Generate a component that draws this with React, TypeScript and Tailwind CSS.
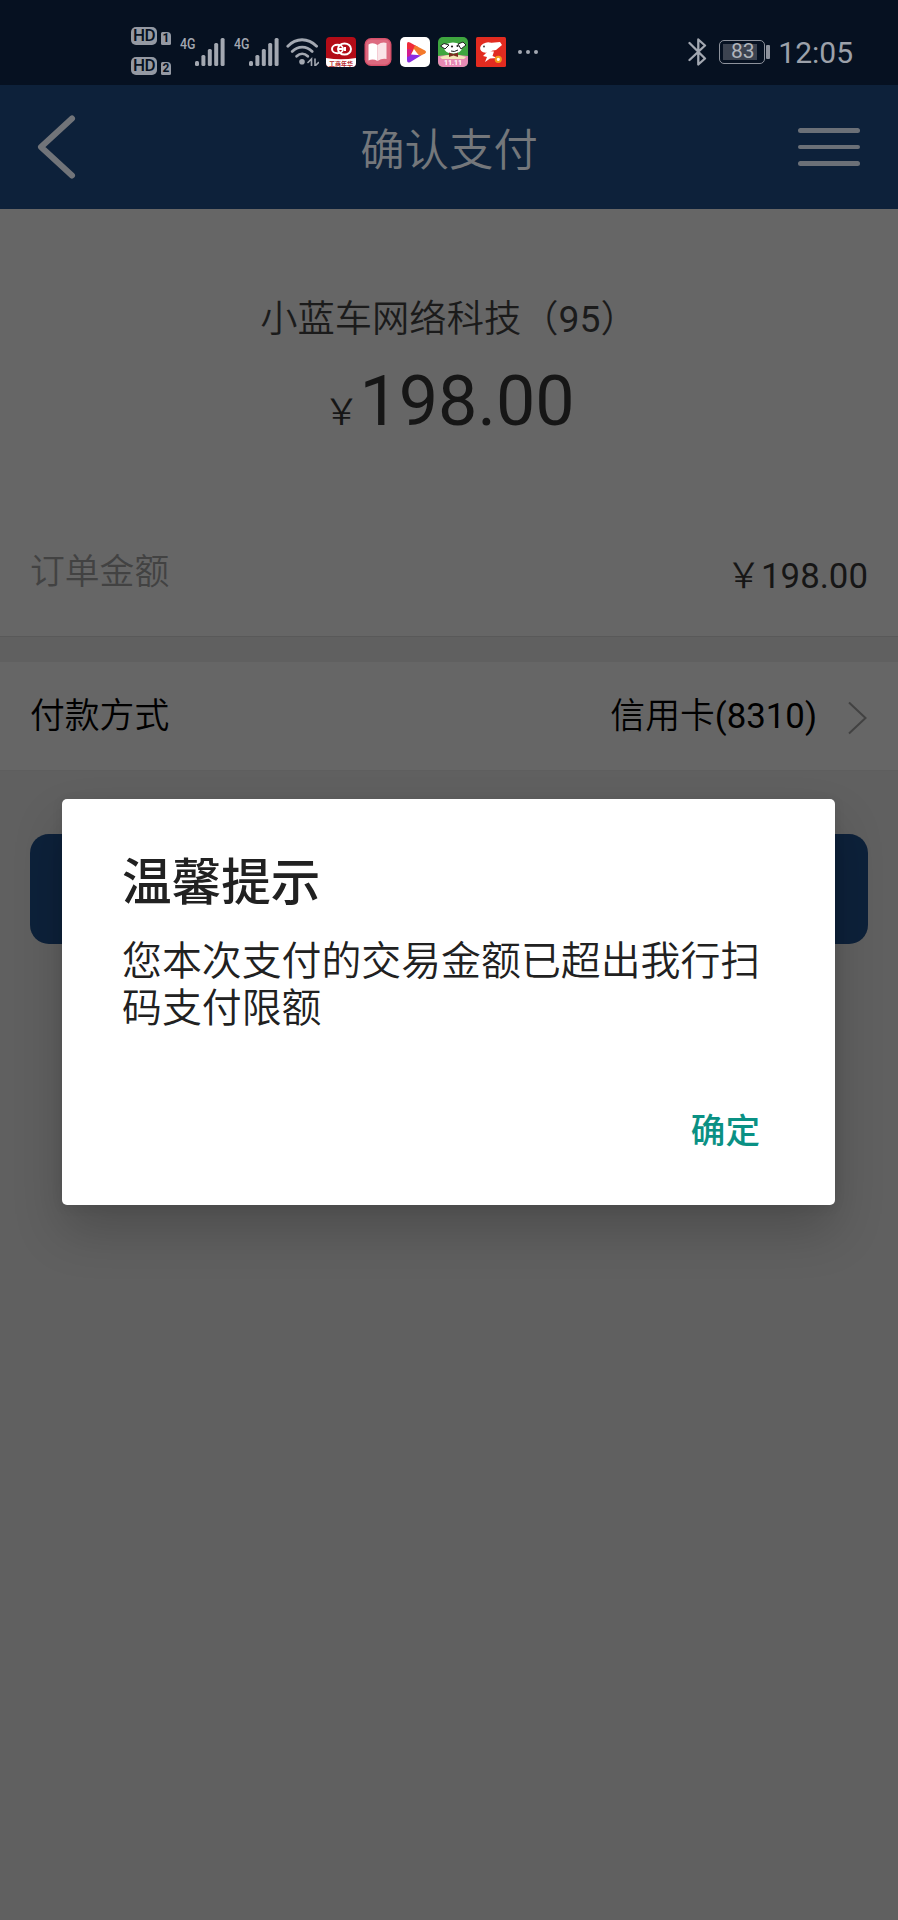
import { FC, ReactNode } from "react";

type SignalProps = { className?: string };

const HdBadge: FC<{ slot: string }> = ({ slot }) => (
  <div className="flex h-[18px] items-end gap-[4px]">
    <div className="flex h-[18px] w-[26px] items-center justify-center rounded-[5px] bg-[#9499a3] text-[17px] leading-none font-medium tracking-[-0.5px] text-[#061121]">
      HD
    </div>
    <div className="flex h-[13px] w-[10px] items-center justify-center rounded-[1.500px] rounded-tr-[4px] bg-[#9499a3] text-[12px] leading-none font-bold text-[#061121]">
      {slot}
    </div>
  </div>
);

const Signal: FC<SignalProps> = ({ className }) => (
  <div className={`flex h-[28px] w-[45px] items-end ${className ?? ""}`}>
    <span className="w-[15px] origin-left scale-x-[0.8] self-start text-[15.5px] leading-[13px] font-medium text-[#a3a8b1]">
      4G
    </span>
    <svg width="30" height="28" viewBox="0 0 30 28" fill="#a3a8b1">
      <rect x="0" y="23" width="4" height="5" rx="1.5" />
      <rect x="6.4" y="17" width="4" height="11" rx="1.5" />
      <rect x="12.8" y="11" width="4" height="17" rx="1.5" />
      <rect x="19.2" y="5" width="4" height="23" rx="1.5" />
      <rect x="25.6" y="0" width="4" height="28" rx="1.5" />
    </svg>
  </div>
);

const Wifi = () => (
  <svg
    className="ml-[7px]"
    width="33"
    height="28"
    viewBox="0 0 33 28"
    fill="none"
    stroke="#a3a8b1"
    strokeWidth="2.8"
    strokeLinecap="round"
  >
    <path d="M1.8 8.2C10 -0.4 22 -0.4 30.6 8.2" />
    <path d="M6.2 13.4C12 7.6 20.4 7.6 26.2 13.4" />
    <path d="M10.6 18.2C14 15 18.4 15 21.8 18.2" />
    <circle cx="16" cy="23.8" r="2.8" fill="#a3a8b1" stroke="none" />
    <path
      d="M22 24.5L25.5 21V27.5M32.5 24.5L29 28V21"
      strokeWidth="1.6"
    />
  </svg>
);

const UnionIcon = () => (
  <svg width="30" height="30" viewBox="0 0 30 30">
    <rect width="30" height="30" rx="4" fill="#b30c17" />
    <path d="M0 21Q15 23.5 30 21V26a4 4 0 0 1-4 4H4a4 4 0 0 1-4-4Z" fill="#fff" />
    <g fill="none" stroke="#fff" strokeWidth="2">
      <ellipse cx="11.5" cy="12" rx="5.5" ry="4.2" />
      <ellipse cx="18.5" cy="12" rx="6.5" ry="5.5" />
      <path d="M12 12h4M19 10v4" />
    </g>
    <text
      x="15"
      y="28.5"
      fontSize="6"
      fontWeight="700"
      textAnchor="middle"
      fill="#b4262b"
    >
      工商年华
    </text>
  </svg>
);

const BookIcon = () => (
  <svg width="28" height="30" viewBox="0 0 28 30">
    <rect x="0.5" y="1" width="27" height="28" rx="6.5" fill="#d5506a" />
    <rect x="2" y="2.500" width="24" height="25" rx="5" fill="#dd6a80" />
    <path d="M4.500 7.500Q9 5 13.500 8V24Q9 21.500 4.500 23.500Z" fill="#fff" />
    <path d="M13.500 8Q18 4.500 22.500 6V22Q18 21 13.500 24Z" fill="#fae4e8" />
  </svg>
);

const PlayIcon = () => (
  <svg width="30" height="30" viewBox="0 0 30 30">
    <rect width="30" height="30" rx="5" fill="#fff" />
    <path d="M7 7Q7 4 10 5.500L18 10L13 17L7 22Z" fill="#ef2b3a" />
    <path d="M15 8.300L25 13.500Q27 15 25 16.500L20 19L13 13Z" fill="#f3792b" />
    <path d="M7 17L14 17.500L21 18.500L10 25.200Q7 26.500 7 23Z" fill="#8b2be2" />
    <path d="M7 12L12 13L10 19L7 20Z" fill="#d11c8f" />
    <path d="M14 12L18 17.500H11Z" fill="#fff" />
  </svg>
);

const DogIcon = () => (
  <svg width="30" height="30" viewBox="0 0 30 30">
    <rect width="30" height="30" rx="5" fill="#3fa63f" />
    <path d="M0 19Q15 17 30 19V25a5 5 0 0 1-5 5H5a5 5 0 0 1-5-5Z" fill="#e68ab4" />
    <path d="M2 20Q15 15 28 20L26 22H4Z" fill="#f3e6b8" />
    <ellipse cx="15" cy="11" rx="9" ry="5.5" fill="#fff" />
    <path
      d="M7 12L2.500 9L6 6.500L11 8ZM20 7L25 5L28 8L23 12Z"
      fill="#fff"
      stroke="#222"
      strokeWidth="1"
    />
    <circle cx="14" cy="9.5" r="1.1" fill="#222" />
    <circle cx="19.5" cy="9" r="1.1" fill="#222" />
    <path d="M13 14Q16 15.500 20 13" fill="none" stroke="#222" strokeWidth="1" />
    <path d="M11 15.500L15.500 17L20 15.500V20L15.500 18.500L11 20Z" fill="#7d2c20" />
    <text x="15" y="28" fontSize="7" fontWeight="700" textAnchor="middle" fill="#fff">
      11.11
    </text>
  </svg>
);

const JdIcon = () => (
  <svg width="30" height="30" viewBox="0 0 30 30">
    <rect width="30" height="30" rx="1.5" fill="#e22b20" />
    <ellipse cx="11" cy="10.5" rx="7" ry="5" transform="rotate(-15 11 10.5)" fill="#fff" />
    <path d="M13 6L24 5L26 8L20 13L14 14Z" fill="#fff" />
    <path d="M12 14L18 14.500L16.500 19L21 21L14 21.500L9 25L11 20L7 19Z" fill="#fff" />
    <circle cx="8" cy="9.5" r="0.9" fill="#333" />
    <circle cx="22.3" cy="22.3" r="2.6" fill="#fff" stroke="#f39a1c" strokeWidth="2" />
  </svg>
);

const Bluetooth = () => (
  <svg
    width="20"
    height="28"
    viewBox="0 0 20 28"
    fill="none"
    stroke="#a3a8b1"
    strokeWidth="2.3"
    strokeLinejoin="round"
    strokeLinecap="round"
  >
    <path d="M1.500 5L17 20.500L10.300 26.500V1.500L17 7.500L1.500 22" />
  </svg>
);

const StatusBar = () => (
  <div className="flex h-[85px] items-center bg-[#061121] pt-[18px] pr-[45px] pl-[131px]">
    <div className="flex w-[41px] -translate-y-px flex-col gap-[12px]">
      <HdBadge slot="1" />
      <HdBadge slot="2" />
    </div>
    <Signal className="ml-[8px]" />
    <Signal className="ml-[9px]" />
    <Wifi />
    <div className="ml-[7px] flex items-center gap-[8px]">
      <UnionIcon />
      <BookIcon />
      <PlayIcon />
      <DogIcon />
      <JdIcon />
    </div>
    <div className="ml-[12px] flex gap-[4px]">
      <i className="size-[4px] rounded-full bg-[#a3a8b1]" />
      <i className="size-[4px] rounded-full bg-[#a3a8b1]" />
      <i className="size-[4px] rounded-full bg-[#a3a8b1]" />
    </div>
    <div className="ml-auto flex items-center">
      <Bluetooth />
      <div className="ml-[11px] flex h-[24px] w-[46px] items-center rounded-[5px] border-[1.5px] border-[#8d929c] p-[3px]">
        <div className="flex h-full w-[34px] items-center justify-center bg-[#3c4350] pl-[5px] text-[21px] leading-none text-[#b1b5bc]">
          83
        </div>
      </div>
      <div className="ml-px h-[14px] w-[4px] rounded-[1px] bg-[#8d929c]" />
      <span className="mt-[2px] ml-[8px] text-[30px] leading-[30px] text-[#9ca1aa]">
        12:05
      </span>
    </div>
  </div>
);

const Header = () => (
  <header className="flex h-[124px] items-center justify-between bg-[#0d213a] pr-[38px] pl-[36px]">
    <svg
      width="64"
      height="66"
      viewBox="0 0 64 66"
      fill="none"
      stroke="#717479"
      strokeWidth="6"
      strokeLinecap="round"
      strokeLinejoin="round"
    >
      <path d="M36 4.500L5 33L36 61.500" />
    </svg>
    <h1 className="mt-[9px] text-[44.4px] leading-none font-[350] text-[#74777b]">
      确认支付
    </h1>
    <div className="flex w-[62px] flex-col gap-[12px]">
      <i className="h-[4.5px] rounded-full bg-[#6b7077]" />
      <i className="h-[4.5px] rounded-full bg-[#6b7077]" />
      <i className="h-[4.5px] rounded-full bg-[#6b7077]" />
    </div>
  </header>
);

type RowProps = { label: ReactNode; children: ReactNode; className?: string };

const Row: FC<RowProps> = ({ label, children, className }) => (
  <div
    className={`flex items-center justify-between px-[30px] text-[34.8px] leading-[40px] ${className ?? ""}`}
  >
    {label}
    {children}
  </div>
);

const Dialog = () => (
  <div className="absolute top-[799px] left-[62px] flex h-[406px] w-[773px] flex-col rounded-[5px] bg-white px-[60px] pt-[55px] text-[#212121] shadow-[0_26px_50px_rgba(0,0,0,0.2),0_2px_12px_rgba(0,0,0,0.08)]">
    <h2 className="text-[49.6px] leading-[58px] font-medium">温馨提示</h2>
    <p className="mt-[26px] text-[39.9px] leading-[47px] font-[350]">
      您本次支付的交易金额已超出我行扫
      <br />
      码支付限额
    </p>
    <button className="mt-[79px] mr-[15px] self-end text-[34.6px] leading-[40px] font-medium text-[#0a9184]">
      确定
    </button>
  </div>
);

export default function App() {
  return (
    <div className="relative h-[1920px] w-[898px] overflow-hidden bg-[#606060] font-[Roboto,'Noto_Sans_CJK_SC',sans-serif]">
      <StatusBar />
      <Header />

      <section className="h-[428px] border-b border-[#595959] bg-[#666666] pt-[88px]">
        <p className="text-center text-[37.3px] leading-[44px] text-[#1b1b1b]">
          <span className="font-[350]">小蓝车网络科技（</span>95
          <span className="font-[350]">）</span>
        </p>
        <p className="mt-[18px] text-center text-[70px] leading-[84px] text-[#161616]">
          <span className="text-[36px] font-[350]">￥</span>198.00
        </p>
        <Row
          className="mt-[101px]"
          label={<span className="-mt-[8px] font-[350] text-[#424242]">订单金额</span>}
        >
          <span className="text-[#161616]">
            <span className="font-[350]">￥</span>198.00
          </span>
        </Row>
      </section>

      <Row
        className="mt-[25px] h-[109px] border-b border-[#5e5e5e] bg-[#666666] text-black"
        label={<span className="font-[350]">付款方式</span>}
      >
        <div className="flex items-center">
          <span>
            <span className="font-[350]">信用卡</span>(8310)
          </span>
          <svg
            className="mt-[4px] ml-[30px]"
            width="21"
            height="34"
            viewBox="0 0 21 34"
            fill="none"
            stroke="#424242"
            strokeWidth="2"
          >
            <path d="M2 1.500L18.500 17L2 32.500" />
          </svg>
        </div>
      </Row>

      <div className="mx-[30px] mt-[63px] h-[110px] rounded-[19px] bg-[#0d213a]" />

      <Dialog />
    </div>
  );
}
